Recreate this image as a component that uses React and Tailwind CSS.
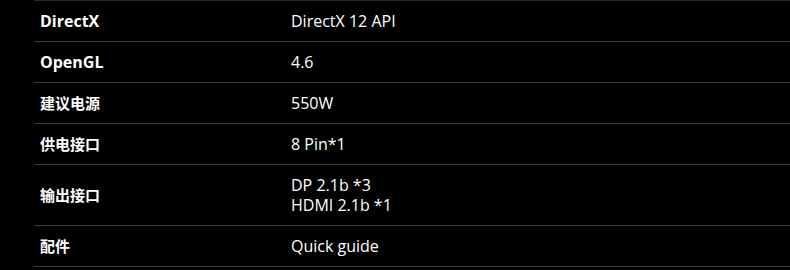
const rows = [
  { label: "DirectX", value: ["DirectX 12 API"] },
  { label: "OpenGL", value: ["4.6"] },
  { label: "建议电源", value: ["550W"], cjk: true },
  { label: "供电接口", value: ["8 Pin*1"], cjk: true },
  { label: "输出接口", value: ["DP 2.1b *3", "HDMI 2.1b *1"], cjk: true },
  { label: "配件", value: ["Quick guide"], cjk: true },
];

export default function App() {
  return (
    <div className="min-h-screen w-[790px] h-[270px] bg-black pl-[34px] font-['Open_Sans','Noto_Sans_CJK_SC',sans-serif] text-[16px] text-white overflow-hidden">
      <div className="border-t border-[#2a2a2a]">
        {rows.map((row) => (
          <div key={row.label} className="flex items-center border-b border-[#3c3c3c] min-h-[41px] py-[10px]">
            <div className={row.cjk ? "w-[251px] pl-[6px] font-bold leading-[20px] text-[15px]" : "w-[251px] pl-[6px] font-bold leading-[20px]"}>
              {row.label}
            </div>
            <div className="pl-[6px] leading-[20px]">
              {row.value.map((v) => (
                <div key={v}>{v}</div>
              ))}
            </div>
          </div>
        ))}
      </div>
    </div>
  );
}
